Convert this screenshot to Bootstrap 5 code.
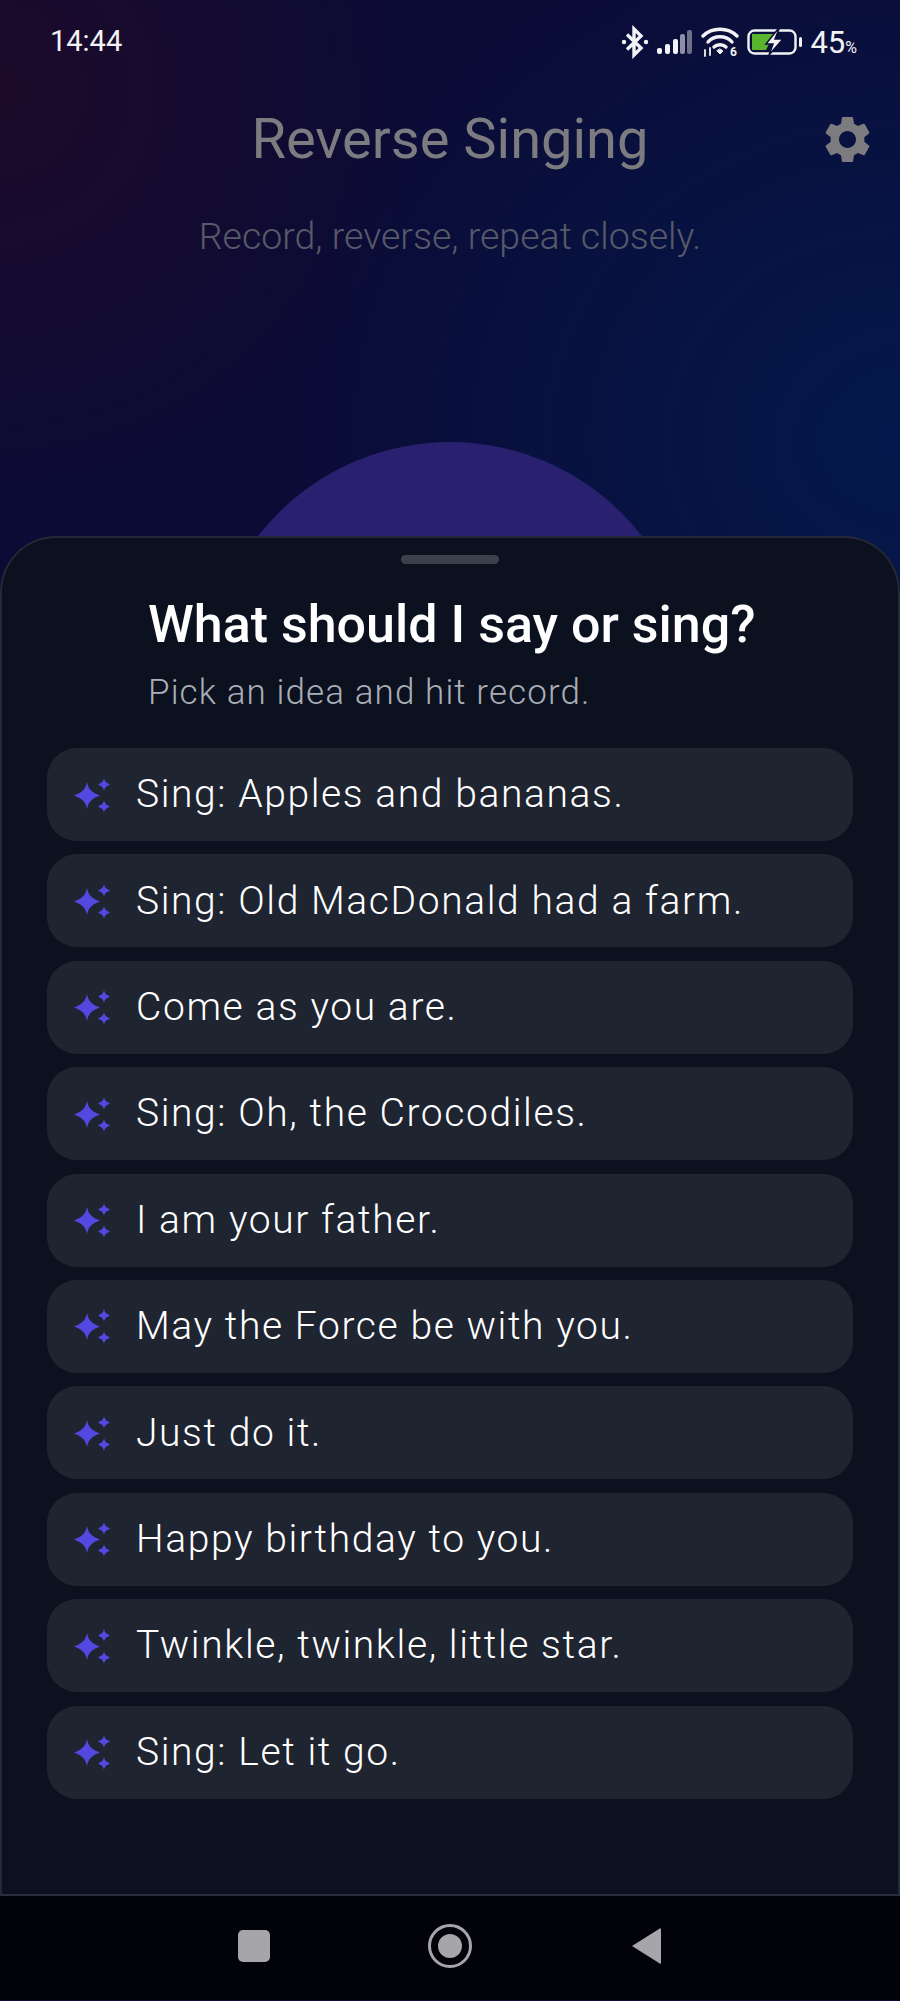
<!DOCTYPE html>
<html lang="en">

<head>
    <meta charset="UTF-8">
    <meta name="viewport" content="width=device-width, initial-scale=1">
    <title>Reverse Singing</title>

    <link href="https://cdn.jsdelivr.net/npm/bootstrap@5.3.0/dist/css/bootstrap.min.css" rel="stylesheet">
    <script src="https://cdn.jsdelivr.net/npm/bootstrap@5.3.0/dist/js/bootstrap.bundle.min.js"></script>

    <style>
        html, body {
            height: 100%;
        }

        body {
            font-family: Roboto, "Liberation Sans", sans-serif;
            background: #020308;
            overflow: hidden;
        }

        .screen {
            width: 900px;
            height: 2001px;
            background:
                radial-gradient(420px 420px at 0 90px, #1d0a2a 0%, rgba(29, 10, 42, 0) 100%),
                radial-gradient(620px 560px at 900px 440px, #04194c 0%, rgba(4, 25, 76, 0) 100%),
                #0b0b36;
        }

        /* Zona superior, tapada por la hoja */
        .hero {
            height: 536px;
            overflow: hidden;
        }

        .status-row {
            height: 84px;
            padding: 0 43px 0 50px;
            color: #f2f3f6;
        }

        .status-time {
            font-size: 29px;
            font-weight: 400;
        }

        .status-pct {
            font-size: 31px;
            font-weight: 400;
            line-height: 1;
            margin-left: 7px;
        }

        .status-pct span {
            font-size: 16px;
        }

        .app-head {
            display: grid;
            grid-template-columns: 1fr auto 1fr;
            align-items: center;
            padding: 0 30px;
            margin-top: 20px;
        }

        .app-title {
            font-size: 56px;
            font-weight: 400;
            line-height: 70px;
            color: #7c7c80;
            margin: 0;
        }

        .app-sub {
            font-size: 37.500px;
            font-weight: 300;
            color: #565a69;
            text-align: center;
            margin: 40px 0 0;
            line-height: 44px;
        }

        .rec-circle {
            width: 486px;
            height: 486px;
            border-radius: 50%;
            background: #2a2070;
            margin: 184px auto 0;
        }

        /* Hoja inferior */
        .sheet {
            height: 1360px;
            background: #0b111e;
            border: 2px solid #232936;
            border-bottom-color: #2a2d40;
            border-radius: 56px 56px 0 0;
            padding: 0 45px;
        }

        .sheet-handle {
            width: 98px;
            height: 9px;
            border-radius: 5px;
            background: #3b404c;
            margin: 17px auto 0;
        }

        .sheet-title {
            font-size: 52px;
            font-weight: 500;
            line-height: 64px;
            color: #fff;
            margin: 29px 0 0 101px;
        }

        .sheet-sub {
            font-size: 35px;
            font-weight: 300;
            letter-spacing: 1.100px;
            line-height: 46px;
            color: #a9adb6;
            margin: 13px 0 0 101px;
        }

        .idea-list {
            gap: 13.400px;
            margin-top: 32px;
            border-radius: 0;
        }

        .idea-list .list-group-item {
            height: 93px;
            border: 0;
            border-radius: 30px;
            background: #1f2431;
            color: #fff;
            font-size: 39px;
            font-weight: 300;
            letter-spacing: 1.600px;
            padding: 0 0 0 26px;
            gap: 25px;
        }

        .nav-row {
            height: 104px;
            background: #020308;
            padding-bottom: 4px;
        }
    </style>
</head>

<body>
    <div class="screen">
        <div class="hero">
            <div class="status-row d-flex justify-content-between align-items-center">
                <span class="status-time">14:44</span>
                <div class="d-flex align-items-center">
                    <!-- bluetooth -->
                    <svg width="28" height="34" viewBox="0 0 28 34" fill="none" stroke="#f2f3f6" stroke-width="3.4">
                        <path d="M6 9.500 L20 23 L13 30 V4 L20 11 L6 24.500" />
                        <circle cx="3" cy="17" r="2.200" fill="#f2f3f6" stroke="none" />
                        <circle cx="25" cy="17" r="2.200" fill="#f2f3f6" stroke="none" />
                    </svg>
                    <!-- cobertura -->
                    <svg class="ms-2" width="36" height="26" viewBox="0 0 36 26" fill="#f2f3f6">
                        <rect x="0" y="19" width="5" height="6" rx="2" />
                        <rect x="8" y="15" width="5" height="10" rx="2" />
                        <rect x="16" y="10" width="5" height="15" rx="2" />
                        <rect x="23" y="5" width="5" height="20" rx="2" fill="#8d8fa3" />
                        <rect x="30" y="1" width="5" height="24" rx="2" fill="#6d7088" />
                    </svg>
                    <!-- wifi 6 -->
                    <svg class="ms-2" width="38" height="30" viewBox="0 0 38 30" fill="none" stroke="#f2f3f6" stroke-width="3.400" stroke-linecap="round">
                        <path d="M2 9 C11 0 27 0 36 9" />
                        <path d="M7 15 C13 8 25 8 31 15" />
                        <path d="M13 20 C16 17 22 17 25 20" />
                        <path d="M16 24 L19 27 L22 24 L19 22 Z" fill="#f2f3f6" stroke-width="1" />
                        <path d="M4 23 V29 M9 21 V28" stroke-width="1.800" />
                        <text x="29" y="29" font-size="12" font-weight="700" fill="#f2f3f6" stroke="none" font-family="Roboto, sans-serif">6</text>
                    </svg>
                    <!-- bateria cargando -->
                    <svg class="ms-2" width="56" height="26" viewBox="0 0 56 26" fill="none">
                        <rect x="1.500" y="1.500" width="47" height="23" rx="6" stroke="#f2f3f6" stroke-width="2.400" />
                        <path d="M5 5 H27 L19 21 H5 Z" fill="#58b52c" />
                        <path d="M31 0 L19 15 H26 L22 26 L36 10 H28 L32 0 Z" fill="#f2f3f6" stroke="#0a0d38" stroke-width="1.500" />
                        <rect x="52" y="8" width="3" height="10" rx="1.500" fill="#f2f3f6" />
                    </svg>
                    <span class="status-pct">45<span>%</span></span>
                </div>
            </div>

            <div class="app-head">
                <span></span>
                <h1 class="app-title">Reverse Singing</h1>
                <svg class="ms-auto" width="45" height="47" viewBox="2.500 2 19 20" fill="#7c7c80">
                    <path d="M19.14 12.94c.04-.3.06-.61.06-.94 0-.32-.02-.64-.07-.94l2.03-1.58c.18-.14.23-.41.12-.61l-1.92-3.32c-.12-.22-.37-.29-.59-.22l-2.39.96c-.5-.38-1.03-.7-1.62-.94l-.36-2.54c-.04-.24-.24-.41-.48-.41h-3.84c-.24 0-.43.17-.47.41l-.36 2.54c-.59.24-1.13.57-1.62.94l-2.39-.96c-.22-.08-.47 0-.59.22L2.74 8.870c-.12.21-.08.47.12.61l2.03 1.58c-.05.3-.09.63-.09.94s.02.64.07.94l-2.03 1.58c-.18.14-.23.41-.12.61l1.92 3.32c.12.22.37.29.59.22l2.39-.96c.5.38 1.03.7 1.62.94l.36 2.54c.05.24.24.41.48.41h3.84c.24 0 .44-.17.47-.41l.36-2.54c.59-.24 1.13-.56 1.62-.94l2.39.96c.22.08.47 0 .59-.22l1.92-3.32c.12-.22.07-.47-.12-.61l-2.010-1.58zM12 15.600c-1.98 0-3.6-1.62-3.6-3.6s1.62-3.6 3.6-3.6 3.6 1.62 3.6 3.6-1.62 3.6-3.6 3.6z" />
                </svg>
            </div>
            <p class="app-sub">Record, reverse, repeat closely.</p>
            <div class="rec-circle"></div>
        </div>

        <div class="sheet">
            <div class="sheet-handle"></div>
            <h2 class="sheet-title">What should I say or sing?</h2>
            <p class="sheet-sub">Pick an idea and hit record.</p>
            <div class="list-group idea-list" id="ideaList"></div>
        </div>

        <div class="nav-row d-flex justify-content-center align-items-center">
            <svg width="460" height="50" viewBox="0 0 460 50">
                <rect x="18" y="9" width="32" height="32" rx="5" fill="#a6a5aa" />
                <circle cx="230" cy="25" r="20.500" fill="none" stroke="#a6a5aa" stroke-width="3" />
                <circle cx="230" cy="25" r="12" fill="#a6a5aa" />
                <path d="M412 25 L439 8 a1 1 0 0 1 2 1 V41 a1 1 0 0 1 -2 1 Z" fill="#a6a5aa" />
            </svg>
        </div>
    </div>

    <script>
        const ideas = [
            "Sing: Apples and bananas.",
            "Sing: Old MacDonald had a farm.",
            "Come as you are.",
            "Sing: Oh, the Crocodiles.",
            "I am your father.",
            "May the Force be with you.",
            "Just do it.",
            "Happy birthday to you.",
            "Twinkle, twinkle, little star.",
            "Sing: Let it go."
        ];

        const sparkle = '<svg width="38" height="38" viewBox="0 0 38 38" fill="#5348e0">' +
            '<path d="M14 6 C15.500 13 18 16 27 19.500 C18 23 15.500 26 14 33 C12.500 26 10 23 1 19.500 C10 16 12.500 13 14 6 Z" />' +
            '<path d="M31 2 C31.800 5.500 33 6.800 37.500 8.500 C33 10.200 31.800 11.500 31 15 C30.200 11.500 29 10.200 24.500 8.500 C29 6.800 30.200 5.500 31 2 Z" />' +
            '<path d="M31 24 C31.800 27.500 33 28.800 37.500 30.500 C33 32.200 31.800 33.500 31 37 C30.200 33.500 29 32.200 24.500 30.500 C29 28.800 30.200 27.500 31 24 Z" />' +
            '</svg>';

        const list = document.getElementById("ideaList");
        ideas.forEach(text => {
            const row = document.createElement("div");
            row.className = "list-group-item d-flex align-items-center";
            row.innerHTML = sparkle + "<span>" + text + "</span>";
            list.appendChild(row);
        });
    </script>
</body>
</html>
